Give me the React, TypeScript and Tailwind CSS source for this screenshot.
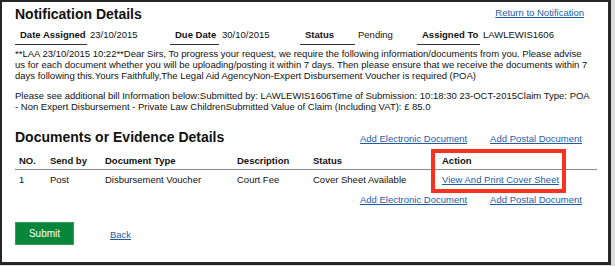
const linkCls = "text-[#1d5ba8] underline underline-offset-[1px]";

const details = [
  { label: "Date Assigned", value: "23/10/2015", lw: "w-[72px]", vw: "w-[83px]" },
  { label: "Due Date", value: "30/10/2015", lw: "w-[49px]", vw: "w-[81px]" },
  { label: "Status", value: "Pending", lw: "w-[55px]", vw: "w-[62px]" },
  { label: "Assigned To", value: "LAWLEWIS1606", lw: "w-[63px]", vw: "w-[80px]" },
];

const noteLines = [
  "**LAA 23/10/2015 10:22**Dear Sirs, To progress your request, we require the following information/documents from you. Please advise",
  "us for each document whether you will be uploading/posting it within 7 days. Then please ensure that we receive the documents within 7",
  "days following this.Yours Faithfully,The Legal Aid AgencyNon-Expert Disbursement Voucher is required (POA)",
];

const billLines = [
  "Please see additional bill Information below:Submitted by: LAWLEWIS1606Time of Submission: 10:18:30 23-OCT-2015Claim Type: POA",
  "- Non Expert Disbursement - Private Law ChildrenSubmitted Value of Claim (Including VAT): £ 85.0",
];

const cols = "grid grid-cols-[31px_55px_132px_76px_129px_159px]";

const DocLinks = ({ className }: { className: string }) => (
  <div className={`flex justify-end gap-[23px] pr-[26px] ${className}`}>
    <a className={linkCls}>Add Electronic Document</a>
    <a className={linkCls}>Add Postal Document</a>
  </div>
);

export default function App() {
  return (
    <div className="w-[615px] h-[266px] bg-[#dcdcdc] font-['Liberation_Sans',Arial,sans-serif] text-[#111]">
      <div className="relative w-[611px] h-[265px] bg-white border-l-2 border-t-2 border-r-[3px] border-b-[3px] border-[#262626] pt-[3px] text-[9.5px] leading-[11px]">
        {/* Header */}
        <div className="flex justify-between items-start pl-[13px] pr-[24px]">
          <h1 className="text-[14px] leading-[18px] font-bold">Notification Details</h1>
          <a className={`${linkCls} mt-[2px]`}>Return to Notification</a>
        </div>

        {/* Summary fields */}
        <div className="flex mt-[6px] pl-[13px]">
          {details.map((d) => (
            <div key={d.label} className="flex">
              <div className={`${d.lw} border-b border-[#333] pl-[5px] pb-[4px] font-bold`}>{d.label}</div>
              <div className={`${d.vw} pl-[3px]`}>{d.value}</div>
            </div>
          ))}
        </div>

        {/* Notes */}
        <div className="mt-[3px] pl-[13px] whitespace-nowrap">
          {noteLines.map((l) => (
            <div key={l}>{l}</div>
          ))}
        </div>
        <div className="mt-[9px] pl-[13px] whitespace-nowrap">
          {billLines.map((l) => (
            <div key={l}>{l}</div>
          ))}
        </div>

        {/* Documents */}
        <div className="flex items-baseline justify-between mt-[16px] pl-[13px]">
          <h2 className="text-[14px] leading-[18px] font-bold">Documents or Evidence Details</h2>
          <DocLinks className="" />
        </div>

        <div className="ml-[13px] mt-[6px] w-[582px]">
          <div className={`${cols} border-b border-[#8a8a8a] pt-[3px] pb-[3px] font-bold`}>
            {["NO.", "Send by", "Document Type", "Description", "Status", "Action"].map((h) => (
              <div key={h} className="pl-[4px]">{h}</div>
            ))}
          </div>
          <div className={`${cols} pt-[4px] pb-[4px]`}>
            <div className="pl-[4px]">1</div>
            <div className="pl-[4px]">Post</div>
            <div className="pl-[4px]">Disbursement Voucher</div>
            <div className="pl-[4px]">Court Fee</div>
            <div className="pl-[4px]">Cover Sheet Available</div>
            <div className="pl-[4px]">
              <a className={linkCls}>View And Print Cover Sheet</a>
            </div>
          </div>
        </div>

        <DocLinks className="mt-[5px]" />

        <div className="flex items-center mt-[17px] pl-[13px]">
          <button className="w-[59px] h-[23px] bg-[#08873b] border border-[#3a9a5e] text-white text-[10px]">Submit</button>
          <a className={`${linkCls} ml-[36px] mt-[2px]`}>Back</a>
        </div>

        {/* Highlight annotation */}
        <div className="absolute left-[429px] top-[147px] w-[135px] h-[44px] border-[4px] border-[#f8321f] pointer-events-none" />
      </div>
    </div>
  );
}
